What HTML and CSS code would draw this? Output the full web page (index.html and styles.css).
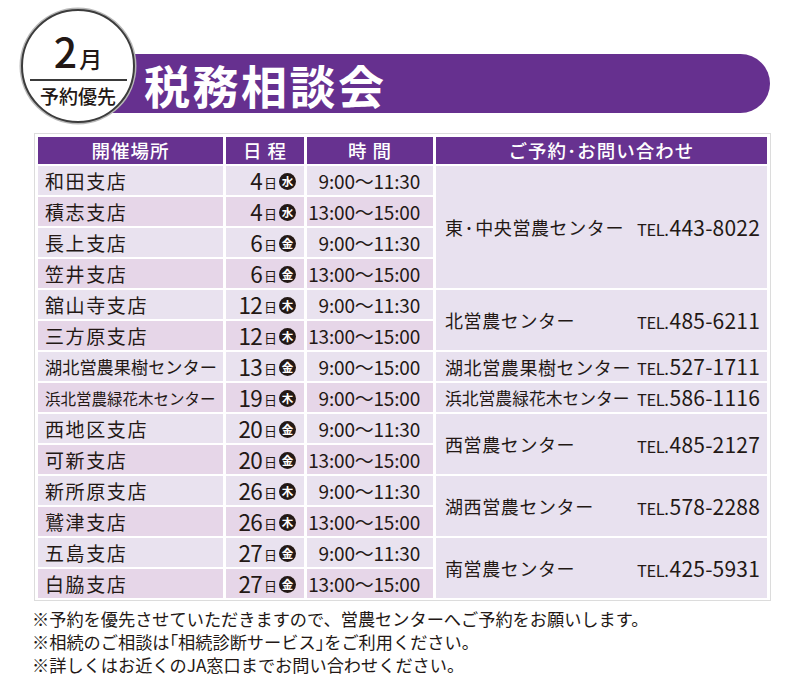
FILE: index.html
```html
<!DOCTYPE html>
<html lang="ja">
<head>
<meta charset="utf-8">
<title>税務相談会</title>
<link rel="stylesheet" href="styles.css">
</head>
<body>
<div class="page">
  <div class="head">
    <div class="badge">
      <div class="month"><span class="mnum">2</span><span class="mk">月</span></div>
      <div class="rule"></div>
      <div class="prio">予約優先</div>
    </div>
    <div class="bar"><h1 class="title">税務相談会</h1></div>
  </div>

  <div class="frame">
    <div class="grid">
      <div class="th c1">開催場所</div>
      <div class="th c2">日 程</div>
      <div class="th c3">時 間</div>
      <div class="th c4">ご予約･お問い合わせ</div>

      <div class="c1 l">和田支店</div>
      <div class="c2 l"><span class="num">4</span><span class="ni">日</span><span class="dw">水</span></div>
      <div class="c3 l">9:00～11:30</div>
      <div class="c4 s4"><span class="nm">東<span class="dot">･</span>中央営農センター</span><span class="tel"><span class="tl">TEL.</span>443-8022</span></div>

      <div class="c1 p">積志支店</div>
      <div class="c2 p"><span class="num">4</span><span class="ni">日</span><span class="dw">水</span></div>
      <div class="c3 p">13:00～15:00</div>

      <div class="c1 l">長上支店</div>
      <div class="c2 l"><span class="num">6</span><span class="ni">日</span><span class="dw">金</span></div>
      <div class="c3 l">9:00～11:30</div>

      <div class="c1 p">笠井支店</div>
      <div class="c2 p"><span class="num">6</span><span class="ni">日</span><span class="dw">金</span></div>
      <div class="c3 p">13:00～15:00</div>

      <div class="c1 l">舘山寺支店</div>
      <div class="c2 l"><span class="num">12</span><span class="ni">日</span><span class="dw">木</span></div>
      <div class="c3 l">9:00～11:30</div>
      <div class="c4 s2"><span class="nm">北営農センター</span><span class="tel"><span class="tl">TEL.</span>485-6211</span></div>

      <div class="c1 p">三方原支店</div>
      <div class="c2 p"><span class="num">12</span><span class="ni">日</span><span class="dw">木</span></div>
      <div class="c3 p">13:00～15:00</div>

      <div class="c1 l long">湖北営農果樹センター</div>
      <div class="c2 l"><span class="num">13</span><span class="ni">日</span><span class="dw">金</span></div>
      <div class="c3 l">9:00～15:00</div>
      <div class="c4"><span class="nm">湖北営農果樹センター</span><span class="tel"><span class="tl">TEL.</span>527-1711</span></div>

      <div class="c1 p longer">浜北営農緑花木センター</div>
      <div class="c2 p"><span class="num">19</span><span class="ni">日</span><span class="dw">木</span></div>
      <div class="c3 p">9:00～15:00</div>
      <div class="c4"><span class="nm narrow">浜北営農緑花木センター</span><span class="tel"><span class="tl">TEL.</span>586-1116</span></div>

      <div class="c1 l">西地区支店</div>
      <div class="c2 l"><span class="num">20</span><span class="ni">日</span><span class="dw">金</span></div>
      <div class="c3 l">9:00～11:30</div>
      <div class="c4 s2"><span class="nm">西営農センター</span><span class="tel"><span class="tl">TEL.</span>485-2127</span></div>

      <div class="c1 p">可新支店</div>
      <div class="c2 p"><span class="num">20</span><span class="ni">日</span><span class="dw">金</span></div>
      <div class="c3 p">13:00～15:00</div>

      <div class="c1 l">新所原支店</div>
      <div class="c2 l"><span class="num">26</span><span class="ni">日</span><span class="dw">木</span></div>
      <div class="c3 l">9:00～11:30</div>
      <div class="c4 s2"><span class="nm">湖西営農センター</span><span class="tel"><span class="tl">TEL.</span>578-2288</span></div>

      <div class="c1 p">鷲津支店</div>
      <div class="c2 p"><span class="num">26</span><span class="ni">日</span><span class="dw">木</span></div>
      <div class="c3 p">13:00～15:00</div>

      <div class="c1 l">五島支店</div>
      <div class="c2 l"><span class="num">27</span><span class="ni">日</span><span class="dw">金</span></div>
      <div class="c3 l">9:00～11:30</div>
      <div class="c4 s2"><span class="nm">南営農センター</span><span class="tel"><span class="tl">TEL.</span>425-5931</span></div>

      <div class="c1 p">白脇支店</div>
      <div class="c2 p"><span class="num">27</span><span class="ni">日</span><span class="dw">金</span></div>
      <div class="c3 p">13:00～15:00</div>
    </div>
  </div>

  <div class="notes">
    <p>※予約を優先させていただきますので、営農センターへご予約をお願いします。</p>
    <p>※相続のご相談は<span class="br">「</span>相続診断サービス<span class="br">」</span>をご利用ください。</p>
    <p>※詳しくはお近くのJA窓口までお問い合わせください。</p>
  </div>
</div>
</body>
</html>
```

FILE: styles.css
```css
* { box-sizing: border-box; }

body {
  margin: 0;
  background: #fff;
  color: #231815;
  font-family: "Noto Sans CJK JP", "Noto Sans", sans-serif;
}

.page {
  width: 800px;
  height: 697px;
  overflow: hidden;
}

/* ---------- heading ---------- */
.head {
  position: relative;
  height: 133px;
  padding-top: 54px;
}

.bar {
  margin-left: 110px;
  width: 660px;
  height: 59px;
  background: #66308f;
  border-radius: 0 30px 30px 0;
  display: flex;
  align-items: center;
  padding-left: 34px;
}

.title {
  margin: 0;
  color: #fff;
  font-size: 46px;
  font-weight: 700;
  letter-spacing: 2.5px;
  line-height: 1;
}

.badge {
  position: absolute;
  left: 21px;
  top: 9px;
  width: 114px;
  height: 114px;
  border-radius: 50%;
  background: #fff;
  border: 2px solid #3c3c3c;
  box-shadow: 0 0 0 1.5px #b8b8b8;
  display: flex;
  flex-direction: column;
  align-items: center;
  padding-top: 19px;
  z-index: 2;
}

.month {
  display: flex;
  align-items: baseline;
  height: 42px;
  line-height: 1;
}

.mnum {
  font-size: 41px;
  font-weight: 500;
}

.mk {
  font-size: 23px;
  font-weight: 500;
  margin-left: 2px;
}

.rule {
  width: 97px;
  height: 1.5px;
  background: #3a3a3a;
  margin-top: 7px;
}

.prio {
  font-size: 19px;
  line-height: 22px;
  margin-top: 4px;
  font-weight: 500;
}

/* ---------- table ---------- */
.frame {
  margin-left: 34px;
  width: 737px;
  border: 1px solid #dcdcdc;
  padding: 3px 2px 2px 3px;
}

.grid {
  display: grid;
  grid-template-columns: 185px 78px 126px 331px;
  grid-template-rows: 27px repeat(14, 29px);
  column-gap: 3px;
  row-gap: 2px;
}

.c1 { grid-column: 1; }
.c2 { grid-column: 2; }
.c3 { grid-column: 3; }
.c4 { grid-column: 4; }

.th {
  background: #673290;
  color: #fff;
  font-size: 18.5px;
  letter-spacing: 1px;
  line-height: 27px;
  text-align: center;
  font-weight: 500;
}

.l { background: #e9e2ef; }
.p { background: #e6d6e8; }

.c1:not(.th) {
  display: flex;
  align-items: center;
  padding-left: 7px;
  font-size: 19px;
  letter-spacing: 1.6px;
  white-space: nowrap;
}

.c1.long {
  font-size: 17.2px;
  letter-spacing: 0;
}

.c1.longer {
  font-size: 15.5px;
  letter-spacing: 0;
}

.c2:not(.th) {
  display: flex;
  align-items: center;
  justify-content: flex-end;
  padding-right: 8px;
}

.num {
  font-size: 22.5px;
  letter-spacing: -0.8px;
  line-height: 1;
}

.ni {
  font-size: 13px;
  margin: 3px 2px 0 2px;
  line-height: 1;
}

.dw {
  width: 17px;
  height: 17px;
  border-radius: 50%;
  background: #231815;
  color: #fff;
  font-size: 11.5px;
  font-weight: 700;
  line-height: 17px;
  text-align: center;
  margin-top: 2px;
}

.c3:not(.th) {
  text-align: right;
  padding-right: 13px;
  font-size: 19px;
  line-height: 29px;
  letter-spacing: -0.2px;
  white-space: nowrap;
}

.c4:not(.th) {
  background: #e8e1ef;
  display: flex;
  align-items: center;
  padding-left: 9px;
  white-space: nowrap;
}

.s2 { grid-row: span 2; }
.s4 { grid-row: span 4; }

.nm {
  width: 192px;
  font-size: 18px;
  letter-spacing: 0.6px;
}

.nm.narrow {
  font-size: 16.8px;
  letter-spacing: 0;
}

.dot {
  margin: 0 1px;
}

.tel {
  font-size: 21px;
  line-height: 1;
  letter-spacing: 0.2px;
}

.tl {
  font-size: 16.5px;
  letter-spacing: -0.4px;
  margin-right: 1px;
}

/* ---------- notes ---------- */
.notes {
  padding-left: 32px;
  margin-top: 6px;
  font-size: 17.2px;
  line-height: 23px;
}

.notes p {
  margin: 0;
}

.br {
  font-feature-settings: "halt";
}
```
